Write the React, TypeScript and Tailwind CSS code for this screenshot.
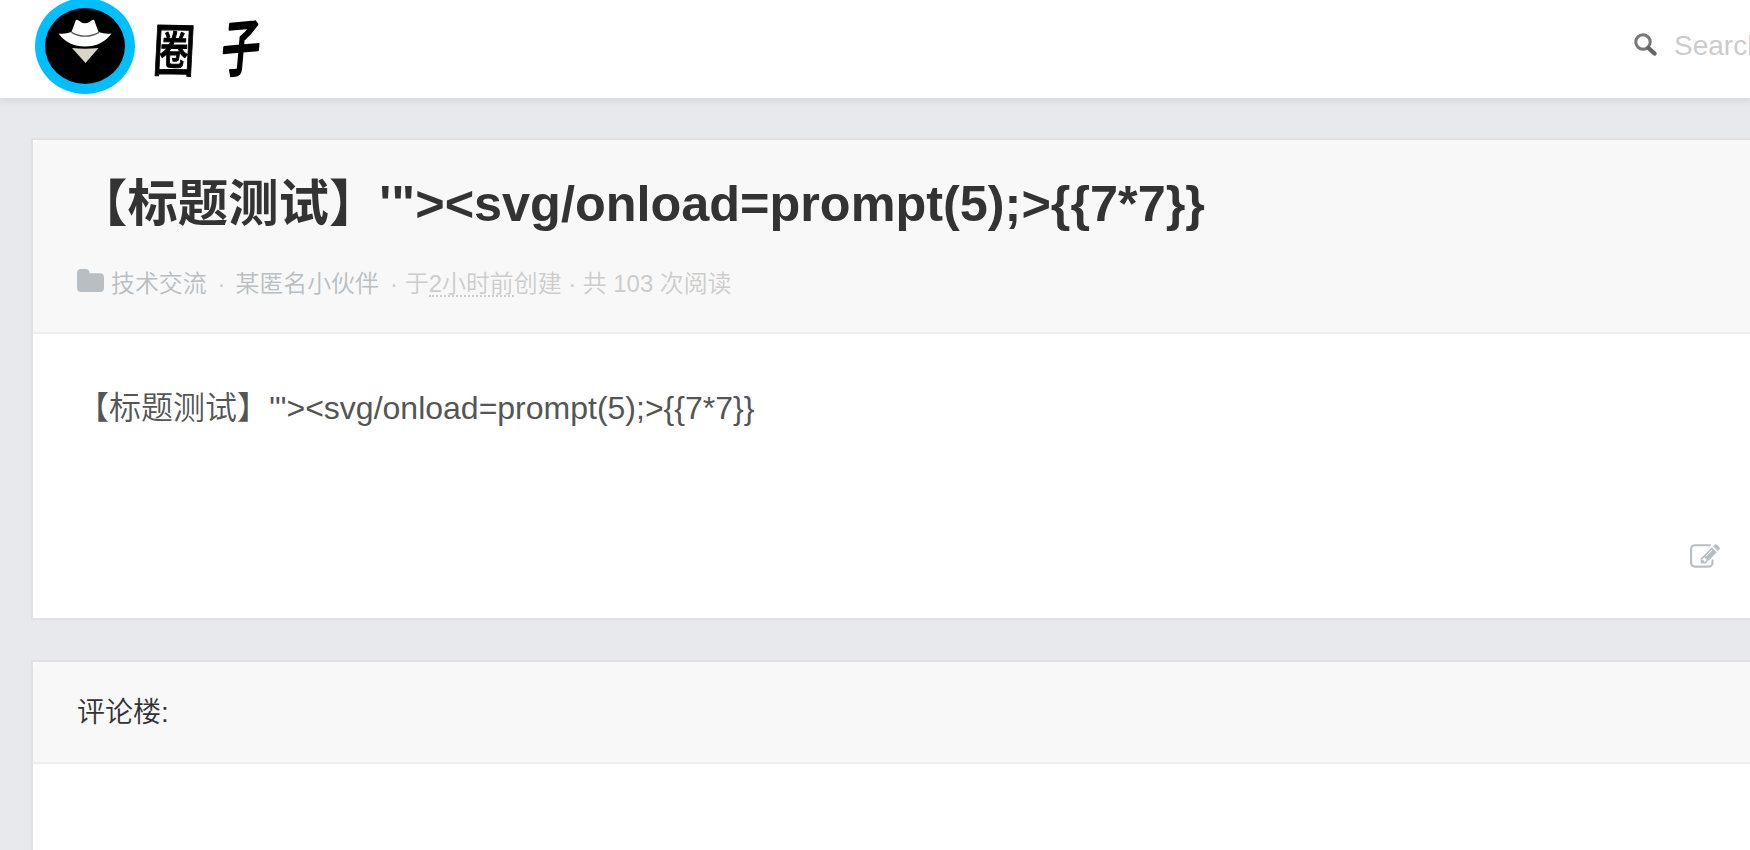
import React from "react";

function Logo() {
  return (
    <svg width="270" height="98" viewBox="0 0 270 98" className="block shrink-0">
      <ellipse cx="50" cy="46" rx="50" ry="48" fill="#00bfff" />
      <ellipse cx="50" cy="46" rx="40" ry="38" fill="#000" />
      <path d="M23.500 33.500 Q30 34.500 36.500 32 L40.500 21 Q41 19 43.500 20.500 Q50 26 56.500 20.500 Q59 19 59.500 21 L63.500 32 Q70 34.500 76.500 33.500 Q67 46.500 50 46.500 Q33 46.500 23.500 33.500Z" fill="#fff" />
      <path d="M36.500 32.300 Q50 40 64 32.300" fill="none" stroke="#555" strokeWidth="1.400" />
      <path d="M37 48 Q50 49.500 63.500 48 L50.500 63Z" fill="#d9d6c9" />
      <g
        fill="#000"
        stroke="#000"
        strokeWidth="0.900"
        strokeLinejoin="round"
        fontFamily="'Noto Sans CJK SC', sans-serif"
        fontWeight="500"
      >
        <text transform="translate(117 71) rotate(1) skewX(-2) scale(0.840 1.140)" fontSize="50">圈</text>
        <text transform="translate(185 72) skewX(-5) skewY(-5) scale(0.760 1.220)" fontSize="50" strokeWidth="2">子</text>
      </g>
    </svg>
  );
}

function SearchIcon() {
  return (
    <svg width="24" height="24" viewBox="0 0 24 24" fill="none" className="mt-[33px] h-6 w-6 shrink-0">
      <circle cx="9" cy="9" r="7.200" stroke="#777" strokeWidth="3" />
      <path d="M14.500 15 L20.500 20.500" stroke="#666" strokeWidth="4.400" strokeLinecap="round" />
    </svg>
  );
}

function FolderIcon() {
  return (
    <svg width="27" height="23" viewBox="64 128 1664 1408" preserveAspectRatio="none" fill="#b8bec2" className="mt-1 shrink-0">
      <path d="M1728 608v704q0 92-66 158t-158 66h-1216q-92 0-158-66t-66-158v-960q0-92 66-158t158-66h320q92 0 158 66t66 158v32h672q92 0 158 66t66 158z" />
    </svg>
  );
}

function EditIcon() {
  return (
    <svg width="30" height="30" viewBox="0 0 1792 1792" fill="#b8bec2" className="shrink-0">
      <path d="M888 1184l116-116-152-152-116 116v56h96v96h56zm440-720q-16-16-33 1l-350 350q-17 17-1 33t33-1l350-350q17-17 1-33zm80 594v190q0 119-84.500 203.500t-203.500 84.500h-832q-119 0-203.500-84.500t-84.500-203.500v-832q0-119 84.500-203.500t203.500-84.500h832q63 0 117 25 15 7 18 23 3 17-9 29l-49 49q-14 14-32 8-23-6-45-6h-832q-66 0-113 47t-47 113v832q0 66 47 113t113 47h832q66 0 113-47t47-113v-126q0-13 9-22l64-64q15-15 35-7t20 29zm-96-738l288 288-672 672h-288v-288zm444 132l-92 92-288-288 92-92q28-28 68-28t68 28l152 152q28 28 28 68t-28 68z" />
    </svg>
  );
}

const payload = "【标题测试】'\"><svg/onload=prompt(5);>{{7*7}}";

export default function App() {
  return (
    <div className="h-[850px] w-[1750px] overflow-hidden bg-[#e8e9ed] font-['Liberation_Sans','Noto_Sans_CJK_SC',sans-serif]">
      <header className="relative flex h-[98px] justify-between bg-white pl-[35px] shadow-[0_2px_8px_rgba(0,0,0,0.1)]">
        <Logo />
        <div className="flex w-[116px] overflow-hidden">
          <SearchIcon />
          <span className="mt-[30px] ml-[16px] text-[28px] leading-[32px] whitespace-nowrap text-[#ccc]">Search</span>
        </div>
      </header>
      <main className="flex flex-col gap-10 pt-10 pl-[31px]">
        <article className="h-[482px] w-[1780px] border-2 border-[#e1e1e1] bg-white">
          <div className="h-[194px] rounded-tl-[6px] border-b-2 border-[#eee] bg-[#f8f8f8] pl-[44px]">
            <h1 className="pt-[29px] text-[50.4px] leading-[70px] font-bold whitespace-nowrap text-[#333]">{payload}</h1>
            <div className="mt-[26px] flex items-start text-[23.900px] leading-[37px] font-[350] whitespace-nowrap text-[#ccc]">
              <FolderIcon />
              <span className="ml-[7px] text-[#b8bec2]">技术交流</span>
              <span className="ml-[11px]">·</span>
              <span className="ml-[10px] text-[#b8bec2]">某匿名小伙伴</span>
              <span className="ml-[11px]">·</span>
              <span className="ml-[7px]">于</span>
              <span className="h-[32px] border-b-2 border-dotted border-[#ccc]">
                <span className="font-normal">2</span>小时前
              </span>
              <span className="whitespace-pre">
                创建 · 共 <span className="font-normal">103</span> 次阅读
              </span>
            </div>
          </div>
          <p className="pt-[52px] pl-[44px] text-[32px] leading-[44px] font-[350] whitespace-nowrap text-[#555]">{payload}</p>
          <div className="flex pt-[112px] pl-[1657px]">
            <EditIcon />
          </div>
        </article>
        <section className="h-[300px] w-[1780px] border-2 border-[#e1e1e1] bg-white">
          <h2 className="h-[102px] rounded-tl-[6px] border-b-2 border-[#eee] bg-[#f8f8f8] pt-px pl-[44px] text-[28px] leading-[100px] font-[350] text-[#333]">评论楼:</h2>
        </section>
      </main>
    </div>
  );
}
